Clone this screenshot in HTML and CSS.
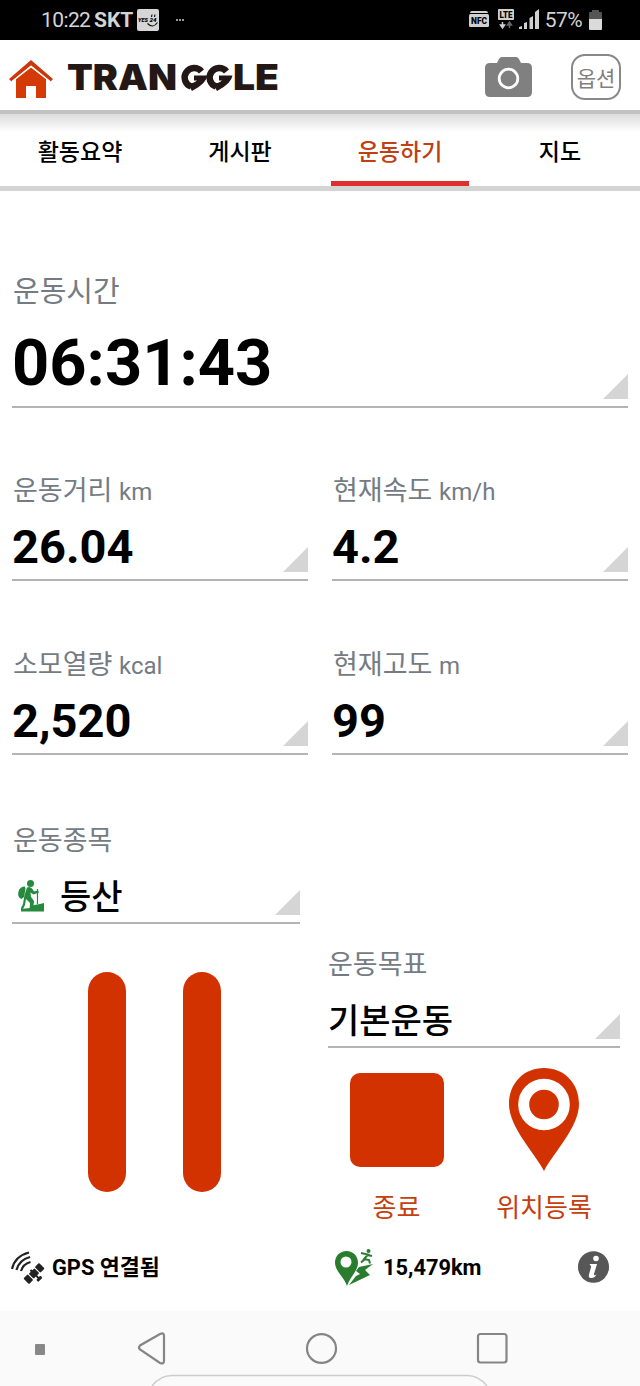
FILE: index.html
```html
<!DOCTYPE html>
<html lang="ko">
<head>
    <meta charset="UTF-8">
    <meta name="viewport" content="width=device-width, initial-scale=1.0">
    <title>TRANGGLE</title>
    <link rel="stylesheet" href="styles.css">
</head>
<body>
    <!-- Phone status bar -->
    <div class="status-bar">
        <span class="clock">10:22</span>
        <span class="carrier">SKT</span>
        <svg class="yes-icon" width="22" height="22" viewBox="0 0 22 22">
            <rect width="22" height="22" rx="2" fill="#d6d6d6"/>
            <text x="1" y="13" textLength="10" lengthAdjust="spacingAndGlyphs">YES</text>
            <text x="12.5" y="13" textLength="7" lengthAdjust="spacingAndGlyphs">24</text>
            <path d="M14.5 8l.5-2.5M17.5 8l.5-2.5M10.500 14.500Q16 20 20.500 13.500" fill="none" stroke="#111" stroke-width="1.200"/>
        </svg>
        <span class="more"><i></i><i></i><i></i></span>
        <svg class="system-icons" width="70" height="22" viewBox="0 0 70 22">
            <path d="M1 3q0-2 2-2h14q2 0 2 2z" fill="#d0d0d0"/>
            <rect x="0" y="4" width="20" height="13" rx="1.500" fill="#d0d0d0"/>
            <text x="2" y="14.300" textLength="16" lengthAdjust="spacingAndGlyphs" class="nfc">NFC</text>
            <rect x="29" y="-1" width="16" height="11" rx="1" fill="#d0d0d0"/>
            <text x="30.500" y="8" textLength="13" lengthAdjust="spacingAndGlyphs" class="lte">LTE</text>
            <path d="M33.500 12v5M31.500 15l2 3 2-3z" stroke="#d0d0d0" stroke-width="1.500" fill="#d0d0d0"/>
            <path d="M40.500 18v-5M38.500 15l2-3 2 3z" stroke="#666" stroke-width="1.500" fill="#666"/>
            <path d="M50 19v-2l3-1v3zM55 19v-6l3-1v7zM60.500 19V8l3.500-2v13zM66 19V2l4-3v20z" fill="#d0d0d0"/>
        </svg>
        <span class="battery-text">57%</span>
        <svg class="battery" width="13" height="20" viewBox="0 0 13 20">
            <path d="M0 9V3q0-1 1-1h2V0h7v2h2q1 0 1 1v6z" fill="#555"/>
            <path d="M0 9h13v10q0 1-1 1H1q-1 0-1-1z" fill="#dadada"/>
        </svg>
    </div>

    <header>
        <svg class="home-icon" width="44" height="38" viewBox="0 0 44 38">
            <path d="M7 19L22 7.500 37 19v19H27V26H17v12H7z" fill="#d43a06"/>
            <path d="M0 19L22 0l22 19-2.500 2.500L22 5.500 2.500 21.500z" fill="#c9370a"/>
            <path d="M3 21.500L22 6.300 41 21.500" fill="none" stroke="#fff" stroke-width="1.400"/>
        </svg>
        <svg class="logo" width="216" height="34" viewBox="0 0 216 34">
            <text x="0" y="29" textLength="110" lengthAdjust="spacingAndGlyphs">TRAN</text>
            <!-- linked double G of the wordmark -->
            <g fill="none" stroke="#231815" stroke-width="6.500">
                <path d="M134.500 10.500A9.500 9.500 0 1 0 124 25.500"/>
                <path d="M159.500 10.500A9.500 9.500 0 1 0 149 25.500"/>
            </g>
            <path d="M127 14.500h13.500q-1 8-15.500 15.500l-4-7q6-1 9-3.500h-3zM152 14.500h13.500q-1 8-15.500 15.500l-4-7q6-1 9-3.500h-3z" fill="#231815"/>
            <text x="166" y="29" textLength="46" lengthAdjust="spacingAndGlyphs">LE</text>
        </svg>
        <svg class="camera" width="48" height="40" viewBox="0 0 48 40">
            <path d="M5 6h7l2-4q1-2 3-2h14q2 0 3 2l2 4h6q5 0 5 5v24q0 5-5 5H5q-5 0-5-5V11q0-5 5-5z" fill="#808080"/>
            <circle cx="23.500" cy="21.500" r="9.300" fill="none" stroke="#fff" stroke-width="2.800"/>
        </svg>
        <button class="option-btn">옵션</button>
    </header>

    <nav class="topnav">
        <a>활동요약</a>
        <a>게시판</a>
        <a class="active">운동하기</a>
        <a>지도</a>
    </nav>

    <main>
        <section class="metric metric-time">
            <h3>운동시간</h3>
            <p>06:31:43</p>
        </section>

        <div class="metric-grid">
            <section class="metric">
                <h3>운동거리 <small>km</small></h3>
                <p>26.04</p>
            </section>
            <section class="metric">
                <h3>현재속도 <small>km/h</small></h3>
                <p>4.2</p>
            </section>
            <section class="metric">
                <h3>소모열량 <small>kcal</small></h3>
                <p>2,520</p>
            </section>
            <section class="metric">
                <h3>현재고도 <small>m</small></h3>
                <p>99</p>
            </section>
        </div>

        <div class="bottom">
            <div class="left">
                <section class="metric metric-select">
                    <h3>운동종목</h3>
                    <p>
                        <svg class="hiker" width="26" height="32" viewBox="0 0 26 32">
                            <g fill="#258a3e">
                                <circle cx="12.500" cy="3.500" r="3.500"/>
                                <path d="M7 6.500q-5 0-6.500 5-1.500 6 3 7.500l2.500-2 1.500-8z"/>
                                <path d="M9 7.500q3-1.500 5 1l2 3 4-1 1 2-5.500 2-3-2 .5 4.500 3 4-1 10h-3.500l.5-8-4-4-1 6-3 6H3v-3l2-4 1.500-9z"/>
                                <path d="M3 31.500v-2.500l9-1 4-3 6-1 4-1v8.500z"/>
                            </g>
                            <path d="M19.500 9v15" stroke="#258a3e" stroke-width="1.200"/>
                        </svg>
                        등산
                    </p>
                </section>
                <div class="pause"><span></span><span></span></div>
            </div>
            <div class="right">
                <section class="metric metric-select">
                    <h3>운동목표</h3>
                    <p>기본운동</p>
                </section>
                <div class="actions">
                    <div class="action">
                        <div class="stop"></div>
                        <span>종료</span>
                    </div>
                    <div class="action">
                        <svg class="pin" width="70" height="103" viewBox="0 0 70 103">
                            <path d="M35 103C25 84 0 59 0 36 0 15 15 0 35 0s35 15 35 36c0 23-25 48-35 67z" fill="#d23200"/>
                            <circle cx="35" cy="36.500" r="20.300" fill="#d23200" stroke="#fff" stroke-width="11"/>
                        </svg>
                        <span>위치등록</span>
                    </div>
                </div>
            </div>
        </div>
    </main>

    <footer>
        <svg class="gps" width="32" height="32" viewBox="0 0 32 32">
            <g fill="none" stroke="#222" stroke-width="2.200">
                <path d="M1 18Q4 5 18 1.500"/>
                <path d="M5.500 19Q8 9 19 6"/>
                <path d="M10 20Q12 13 19.500 11"/>
            </g>
            <!-- satellite: body along one diagonal, panels along the other -->
            <g transform="translate(23 22.500) rotate(45)" fill="#222">
                <rect x="-3.500" y="-4" width="7" height="8" rx="1"/>
                <rect x="-4" y="-11" width="8" height="6" rx="1"/>
                <rect x="-4" y="5" width="8" height="6" rx="1"/>
                <rect x="-5" y="-1" width="13" height="2"/>
                <rect x="6" y="-3" width="3" height="6" rx="1"/>
            </g>
        </svg>
        <span class="gps-text">GPS 연결됨</span>
        <svg class="route" width="38" height="37" viewBox="0 0 38 37">
            <path d="M12 37C9 28 0 22 0 13.500 0 7 5 2 11.500 2S23 7 23 13.500C23 22 15 28 12 37z" fill="#2a7d2e"/>
            <circle cx="11" cy="13" r="5.500" fill="#fff"/>
            <path d="M14 36l7-9 4-2-4-3 3-4 14-3-8 6 5 5z" fill="#2a7d2e"/>
            <circle cx="33.500" cy="2" r="2" fill="#2a7d2e"/>
            <path d="M26 4l7 1.500-4 4.500 5 1 1 3.500M30 10l-4 3.500M32 6l5 1" fill="none" stroke="#2a7d2e" stroke-width="2"/>
        </svg>
        <span class="total">15,479km</span>
        <svg class="info" width="31" height="32" viewBox="0 0 31 32">
            <ellipse cx="15.500" cy="16" rx="15.500" ry="15.800" fill="#575757"/>
            <circle cx="18" cy="7.500" r="2.800" fill="#fff"/>
            <path d="M11.500 13h7.500l-3 10q-.5 2 2.500.5-2 3.500-5 3.500-3.500 0-2.500-3.500l2.200-8z" fill="#fff"/>
        </svg>
    </footer>

    <!-- Android navigation buttons -->
    <div class="android-nav">
        <svg width="640" height="75" viewBox="0 0 640 75">
            <rect x="35" y="33" width="10" height="11" rx="1" fill="#888"/>
            <g fill="none" stroke="#858585" stroke-width="2.200">
                <path d="M140 34.500q-2 2 0 4l20 13.500q4 1.500 4-2V25q0-4-4-2z"/>
                <ellipse cx="321.500" cy="37.500" rx="14.500" ry="14.300"/>
                <rect x="478" y="23" width="28.500" height="28.500" rx="2.500"/>
            </g>
            <path d="M152 75q8-10.500 20-10.500h295q12 0 20 10.500" fill="none" stroke="#ccc" stroke-width="1.500"/>
        </svg>
    </div>
</body>
</html>
```
FILE: styles.css
```css
* {
    box-sizing: border-box;
}
body {
    margin: 0;
    width: 640px;
    height: 1386px;
    overflow: hidden;
    background: #fff;
    font-family: Roboto, "Noto Sans CJK KR", sans-serif;
    color: #000;
}
svg {
    display: block;
    flex: none;
    overflow: visible;
}
h3, p {
    margin: 0;
}

/* Status bar */
.status-bar {
    display: flex;
    align-items: center;
    height: 40px;
    padding: 0 38px 0 41px;
    background: #000;
    color: #d4d4d4;
    font-size: 21px;
}
.clock {
    width: 53px;
    letter-spacing: -0.6px;
}
.carrier {
    width: 43px;
    font-weight: bold;
}
.yes-icon text {
    font-size: 5.5px;
    font-weight: 900;
    font-style: italic;
}
.more {
    display: flex;
    gap: 1px;
    margin-left: 17px;
}
.more i {
    width: 2px;
    height: 2px;
    background: #999;
}
.system-icons {
    margin-left: auto;
    margin-top: 2px;
}
.nfc, .lte {
    font-size: 9.5px;
    font-weight: 900;
}
.battery-text {
    margin: 0 7px 0 6px;
    letter-spacing: -0.6px;
}

/* Header */
header {
    display: flex;
    align-items: center;
    height: 74px;
    padding: 0 19px 0 9px;
    border-bottom: 4px solid #c2c2c2;
}
.home-icon {
    margin-top: 7px;
}
.logo {
    margin-left: 14px;
    margin-top: 5px;
}
.logo text {
    font-family: Inter, sans-serif;
    font-size: 36px;
    font-weight: 900;
    fill: #231815;
}
.camera {
    margin-left: auto;
    margin-top: 4px;
}
.option-btn {
    width: 50px;
    height: 46px;
    margin: 3px 0 0 38px;
    padding: 0;
    border: 2px solid #888;
    border-radius: 14px;
    background: #fff;
    color: #808080;
    font-family: "Noto Sans CJK KR", sans-serif;
    font-size: 21px;
    line-height: 38px;
}

/* Tabs */
.topnav {
    display: flex;
    height: 77px;
    border-bottom: 5px solid #d4d4d4;
    background: linear-gradient(#dcdcdc, #fff 18px);
}
.topnav a {
    flex: 1;
    margin: 0 11px;
    text-align: center;
    font-size: 23px;
    font-weight: 500;
    line-height: 77px;
}
.topnav .active {
    color: #c04014;
    border-bottom: 5px solid #e02d2d;
}

/* Metrics */
main {
    height: 1044px;
    padding: 81px 12px 0;
}
.metric {
    position: relative;
    height: 109px;
    border-bottom: 2px solid #b4b4b4;
}
.metric h3 {
    padding-left: 1px;
    color: #747b83;
    font-size: 27px;
    font-weight: 400;
    line-height: 38px;
    white-space: nowrap;
}
.metric small {
    font-size: 24px;
}
.metric p {
    margin-top: 6px;
    font-size: 47px;
    font-weight: bold;
    line-height: 60px;
}
/* spinner style corner mark */
.metric::after {
    content: "";
    position: absolute;
    right: 0;
    bottom: 7px;
    width: 25px;
    height: 25px;
    background: #d5d5d5;
    clip-path: polygon(100% 0, 100% 100%, 0 100%);
}
.metric-time {
    height: 136px;
}
.metric-time h3 {
    font-size: 29px;
    line-height: 40px;
}
.metric-time p {
    font-size: 65px;
    line-height: 80px;
    margin-top: 11px;
}
.metric-grid {
    display: grid;
    grid-template-columns: 296px 296px;
    gap: 65px 24px;
    margin-top: 64px;
}
.bottom {
    display: grid;
    grid-template-columns: 288px 292px;
    column-gap: 28px;
    margin-top: 66px;
}
.metric-select {
    height: 103px;
}
.metric-select h3 {
    line-height: 40px;
}
.right .metric-select h3 {
    padding-left: 0;
}
.metric-select p {
    display: flex;
    align-items: center;
    margin-top: 11px;
    font-size: 34px;
    font-weight: 500;
    line-height: 50px;
}
.hiker {
    margin: -3px 16px 0 6px;
}
.pause {
    display: flex;
    gap: 57px;
    margin: 48px 0 0 76px;
}
.pause span {
    width: 38px;
    height: 220px;
    border-radius: 19px;
    background: #d23200;
}
.right {
    padding-top: 124px;
}
.actions {
    display: flex;
    margin-top: 20px;
}
.action {
    display: flex;
    flex: none;
    flex-direction: column;
    align-items: center;
    width: 137px;
    color: #c5400f;
    font-size: 26px;
    line-height: 36px;
}
.action + .action {
    width: 158px;
}
.action span {
    margin-top: 19px;
    white-space: nowrap;
}
.stop {
    width: 94px;
    height: 94px;
    margin: 5px 0 4px;
    border-radius: 10px;
    background: #d23200;
}

/* Bottom info line */
footer {
    display: flex;
    align-items: center;
    height: 64px;
    margin-bottom: 12px;
    padding: 0 31px 0 11px;
    font-size: 21.8px;
    font-weight: bold;
}
.gps-text {
    width: 283px;
    margin: -3px 0 0 9px;
}
.total {
    margin-left: 10px;
}
.info {
    margin-left: auto;
}
.android-nav {
    height: 75px;
    background: #fafafa;
}
```
